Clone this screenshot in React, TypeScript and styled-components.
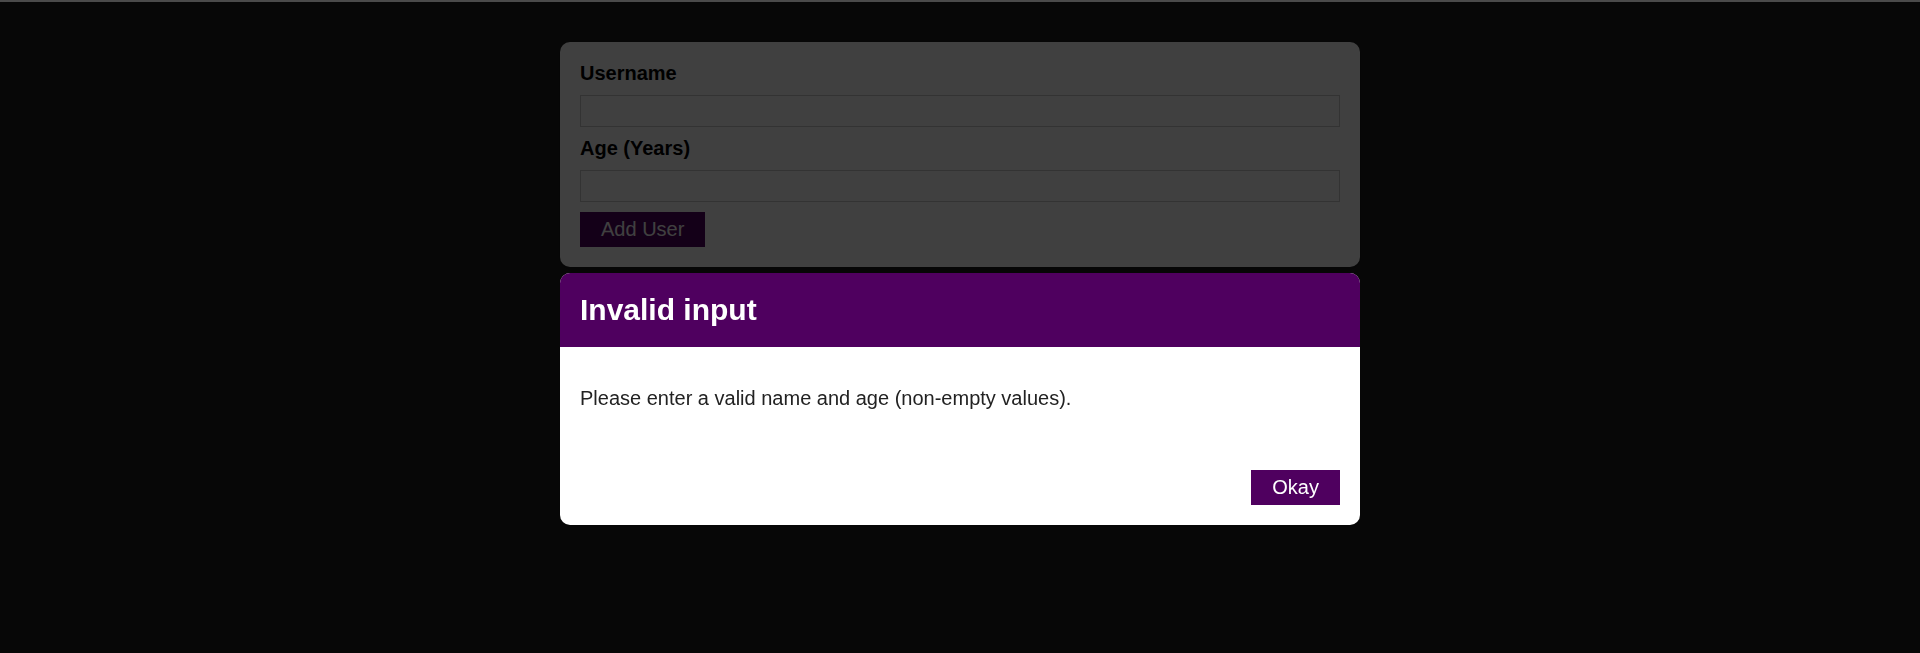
import React from "react"
import styled, { createGlobalStyle } from "styled-components"

const GlobalStyle = createGlobalStyle`
  * {
    box-sizing: border-box;
  }
  html {
    font-family: "Liberation Sans", Arial, sans-serif;
    font-size: 20px;
  }
  body {
    margin: 0;
    background: #1f1f1f;
  }
`

export default function App() {
  return (
    <>
      <GlobalStyle />
      <TopLine />
      <FormCard>
        <form onSubmit={e => e.preventDefault()}>
          <Label htmlFor="username">Username</Label>
          <Input id="username" type="text" />
          <Label htmlFor="age">Age (Years)</Label>
          <Input id="age" type="number" />
          <Button type="submit">Add User</Button>
        </form>
      </FormCard>
      <Backdrop />
      <Modal>
        <ModalHeader>
          <ModalTitle>Invalid input</ModalTitle>
        </ModalHeader>
        <ModalContent>
          <Message>Please enter a valid name and age (non-empty values).</Message>
        </ModalContent>
        <ModalActions>
          <Button type="button">Okay</Button>
        </ModalActions>
      </Modal>
    </>
  )
}

const TopLine = styled.div`
  height: 2px;
  background: #4a4a4a;
`

const Card = styled.div`
  background: white;
  border-radius: 10px;
  box-shadow: 0 2px 8px rgba(0, 0, 0, 0.26);
`

const FormCard = styled(Card)`
  margin: 40px auto;
  padding: 20px;
  width: 90%;
  max-width: 800px;
`

const Label = styled.label`
  display: block;
  font-weight: bold;
  margin-bottom: 10px;
  color: black;
`

const Input = styled.input`
  font: inherit;
  display: block;
  width: 100%;
  height: 32px;
  border: 1px solid #ccc;
  padding: 3px;
  margin: 0 0 10px;
  background: white;
`

const Button = styled.button`
  font: inherit;
  border: 1px solid #4f005f;
  background: #4f005f;
  color: white;
  padding: 5px 20px;
  cursor: pointer;
`

const Backdrop = styled.div`
  position: fixed;
  top: 2px;
  left: 0;
  width: 100%;
  height: 100vh;
  z-index: 10;
  background: rgba(0, 0, 0, 0.75);
`

const Modal = styled(Card)`
  position: fixed;
  top: 273px;
  left: calc(50% - 400px);
  width: 800px;
  z-index: 100;
  overflow: hidden;
`

const ModalHeader = styled.header`
  background: #4f005f;
  padding: 20px;
`

const ModalTitle = styled.h2`
  margin: 0;
  color: white;
  font-size: 30px;
`

const ModalContent = styled.div`
  padding: 20px;
`

const Message = styled.p`
  margin: 20px 0;
  color: #222;
`

const ModalActions = styled.footer`
  padding: 20px;
  display: flex;
  justify-content: flex-end;
`
